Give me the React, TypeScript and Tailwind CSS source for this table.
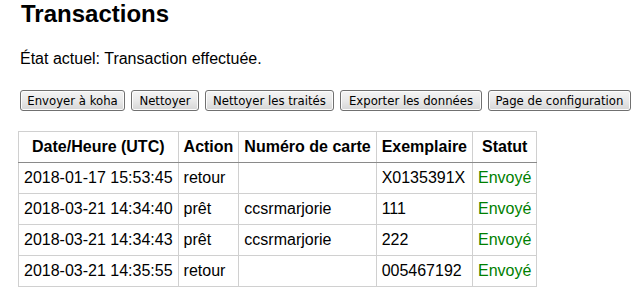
import React from "react";

const buttons: { label: string; w: string }[] = [
  { label: "Envoyer à koha", w: "w-[105px]" },
  { label: "Nettoyer", w: "w-[68px]" },
  { label: "Nettoyer les traités", w: "w-[129px]" },
  { label: "Exporter les données", w: "w-[142px]" },
  { label: "Page de configuration", w: "w-[143px]" },
];

const rows = [
  ["2018-01-17 15:53:45", "retour", "", "X0135391X"],
  ["2018-03-21 14:34:40", "prêt", "ccsrmarjorie", "111"],
  ["2018-03-21 14:34:43", "prêt", "ccsrmarjorie", "222"],
  ["2018-03-21 14:35:55", "retour", "", "005467192"],
];

export default function App() {
  return (
    <div
      className="w-[639px] h-[296px] bg-white text-black pl-[20px] overflow-hidden"
      style={{ fontFamily: "'Liberation Sans', Arial, sans-serif" }}
    >
      <h2 className="text-[24px] leading-[28px] font-bold pl-[1px]">Transactions</h2>
      <p className="mt-[22px] text-[16px] leading-[18px]">État actuel: Transaction effectuée.</p>
      <div className="mt-[22px] flex gap-[6px]">
        {buttons.map((b) => (
          <button
            key={b.label}
            className={`${b.w} h-[21px] flex items-center justify-center rounded-[3px] border border-[#707070] bg-gradient-to-b from-[#f4f4f4] via-[#e9e9e9] to-[#d6d6d6] shadow-[inset_0_0_0_1px_#fcfcfc] text-[13px] text-black leading-none`}
            style={{ fontFamily: "'DejaVu Sans Condensed', 'DejaVu Sans', sans-serif", fontStretch: "condensed" }}
          >
            {b.label}
          </button>
        ))}
      </div>
      <table className="mt-[20px] -ml-[2px] border-collapse text-[16px] leading-[18px]">
        <thead>
          <tr>
            {["Date/Heure (UTC)", "Action", "Numéro de carte", "Exemplaire", "Statut"].map((h) => (
              <th
                key={h}
                className="border border-[#d0d0d0] border-b-[#8a8a8a] px-[5px] py-[6px] font-bold text-center whitespace-nowrap"
              >
                {h}
              </th>
            ))}
          </tr>
        </thead>
        <tbody>
          {rows.map((r, i) => (
            <tr key={i}>
              {r.map((c, j) => (
                <td key={j} className="border border-[#d0d0d0] px-[5px] py-[6px] text-left whitespace-nowrap">
                  {c}
                </td>
              ))}
              <td className="border border-[#d0d0d0] px-[5px] py-[6px] text-left text-[#008000]">Envoyé</td>
            </tr>
          ))}
        </tbody>
      </table>
    </div>
  );
}
